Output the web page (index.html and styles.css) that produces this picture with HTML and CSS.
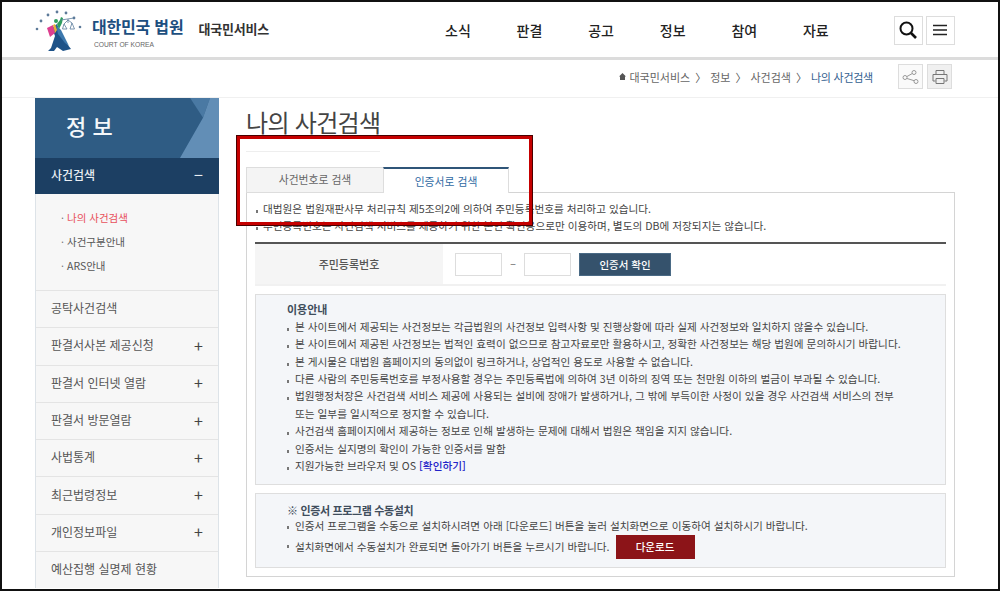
FILE: index.html
```html
<!DOCTYPE html>
<html lang="ko">
<head>
<meta charset="utf-8">
<title>나의 사건검색</title>
<link rel="stylesheet" href="styles.css">
</head>
<body>
<div class="frame">
  <header class="top">
    <div class="logo">
      <svg class="emblem" width="48" height="42" viewBox="0 0 48 42">
        <g fill="#5d7a99"><circle cx="2" cy="19" r="1.3"/><circle cx="6" cy="11" r="1.4"/><circle cx="13" cy="5" r="1.4"/><circle cx="22" cy="2" r="1.4"/><circle cx="31" cy="3" r="1.4"/><circle cx="39" cy="8" r="1.4"/><circle cx="45" cy="17" r="1.3"/></g>
        <path d="M13 41 L16 38 L20 26 L17 18 L22 14 L25 22 L29 30 L36 39 L28 41 L22 37 L19 41 Z" fill="#1d5288"/>
        <path d="M21 15 L26 20 L34 36 L30 33 L23 24 Z" fill="#3d78ad"/>
        <path d="M12 18 L18 15 L20 23 L15 27 Z" fill="#dd3f8f"/>
        <path d="M18 15 L20 23 L22 20 L20 14 Z" fill="#e9b23a"/>
        <path d="M22 14 L25 10 L26 7 L28 8 L27 13 L24 19 Z" fill="#2f9e5f"/>
        <circle cx="21" cy="11" r="2" fill="#2f9e5f"/>
        <path d="M26 10 L39 8 M33 9 V13 M29 14 L27.5 19 H32 Z M37 13 L35 19 H39.5 Z M33 10 L29 14 M33 10 L37 13" stroke="#5a7c9c" stroke-width=".8" fill="none"/>
      </svg>
      <div class="logo-text">
        <div class="logo-ko">대한민국 법원</div>
        <div class="logo-en">COURT OF KOREA</div>
      </div>
      <div class="logo-sub">대국민서비스</div>
    </div>
    <nav class="gnb">
      <span>소식</span><span>판결</span><span>공고</span><span>정보</span><span>참여</span><span>자료</span>
    </nav>
    <div class="top-btns">
      <button class="icon-btn" aria-label="검색">
        <svg width="20" height="20" viewBox="0 0 20 20"><circle cx="8.5" cy="8.5" r="6" fill="none" stroke="#111" stroke-width="2"/><path d="M13 13 L18 18" stroke="#111" stroke-width="2.6"/></svg>
      </button>
      <button class="icon-btn" aria-label="메뉴">
        <svg width="16" height="12" viewBox="0 0 16 12"><path d="M1 1.5H15M1 6H15M1 10.5H15" stroke="#222" stroke-width="1.7"/></svg>
      </button>
    </div>
  </header>
  <div class="crumbbar">
    <div class="crumbs">
      <svg class="home" width="7" height="7" viewBox="0 0 7 7"><path d="M3.5 0 L7 3.4H6V7H1V3.4H0Z" fill="#555"/></svg>
      <span>대국민서비스</span><i>〉</i><span>정보</span><i>〉</i><span>사건검색</span><i>〉</i><span class="cur">나의 사건검색</span>
    </div>
    <div class="tools">
      <button class="tool" aria-label="공유">
        <svg width="18" height="14" viewBox="0 0 18 14"><circle cx="3" cy="7.5" r="2" fill="none" stroke="#999"/><circle cx="12" cy="2.5" r="2" fill="none" stroke="#999"/><circle cx="14" cy="11.5" r="2" fill="none" stroke="#999"/><path d="M5 6.5 L10.3 3.5M5 8.5 L12.2 10.7" stroke="#999"/></svg>
      </button>
      <button class="tool tool-alt" aria-label="인쇄">
        <svg width="16" height="16" viewBox="0 0 16 16"><path d="M4 5V1.5H12V5M3.5 12H1V5.5H15V12H12.5M4 9.5H12V14.5H4Z" fill="none" stroke="#777"/></svg>
      </button>
    </div>
  </div>
  <div class="body">
    <aside class="side">
      <div class="side-title"><h2>정 보</h2><span class="facet facet-a"></span><span class="facet facet-b"></span></div>
      <div class="side-item active"><span>사건검색</span><b>−</b></div>
      <ul class="sub">
        <li class="on">나의 사건검색</li>
        <li>사건구분안내</li>
        <li>ARS안내</li>
      </ul>
      <div class="side-item"><span>공탁사건검색</span></div>
      <div class="side-item"><span>판결서사본 제공신청</span><b>+</b></div>
      <div class="side-item"><span>판결서 인터넷 열람</span><b>+</b></div>
      <div class="side-item"><span>판결서 방문열람</span><b>+</b></div>
      <div class="side-item"><span>사법통계</span><b>+</b></div>
      <div class="side-item"><span>최근법령정보</span><b>+</b></div>
      <div class="side-item"><span>개인정보파일</span><b>+</b></div>
      <div class="side-item"><span>예산집행 실명제 현황</span></div>
    </aside>
    <main class="main">
      <h1>나의 사건검색</h1>
      <div class="tabs">
        <div class="tab">사건번호로 검색</div>
        <div class="tab tab-on">인증서로 검색</div>
      </div>
      <section class="panel">
        <ul class="notes top-notes">
          <li>대법원은 법원재판사무 처리규칙 제5조의2에 의하여 주민등록번호를 처리하고 있습니다.</li>
          <li>주민등록번호는 사건검색 서비스를 제공하기 위한 본인 확인용으로만 이용하며, 별도의 DB에 저장되지는 않습니다.</li>
        </ul>
        <div class="idrow">
          <div class="idlabel">주민등록번호</div>
          <div class="idfields">
            <span class="inp"></span><span class="dash">−</span><span class="inp"></span>
            <button class="confirm">인증서 확인</button>
          </div>
        </div>
        <div class="box guide">
          <h3>이용안내</h3>
          <ul class="notes">
            <li>본 사이트에서 제공되는 사건정보는 각급법원의 사건정보 입력사항 및 진행상황에 따라 실제 사건정보와 일치하지 않을수 있습니다.</li>
            <li>본 사이트에서 제공된 사건정보는 법적인 효력이 없으므로 참고자료로만 활용하시고, 정확한 사건정보는 해당 법원에 문의하시기 바랍니다.</li>
            <li>본 게시물은 대법원 홈페이지의 동의없이 링크하거나, 상업적인 용도로 사용할 수 없습니다.</li>
            <li>다른 사람의 주민등록번호를 부정사용할 경우는 주민등록법에 의하여 3년 이하의 징역 또는 천만원 이하의 벌금이 부과될 수 있습니다.</li>
            <li>법원행정처장은 사건검색 서비스 제공에 사용되는 설비에 장애가 발생하거나, 그 밖에 부득이한 사정이 있을 경우 사건검색 서비스의 전부<br>또는 일부를 일시적으로 정지할 수 있습니다.</li>
            <li>사건검색 홈페이지에서 제공하는 정보로 인해 발생하는 문제에 대해서 법원은 책임을 지지 않습니다.</li>
            <li>인증서는 실지명의 확인이 가능한 인증서를 말함</li>
            <li>지원가능한 브라우저 및 OS <a class="link">[확인하기]</a></li>
          </ul>
        </div>
        <div class="box manual">
          <h3>※ 인증서 프로그램 수동설치</h3>
          <ul class="notes">
            <li>인증서 프로그램을 수동으로 설치하시려면 아래 [다운로드] 버튼을 눌러 설치화면으로 이동하여 설치하시기 바랍니다.</li>
            <li class="dl-line">설치화면에서 수동설치가 완료되면 돌아가기 버튼을 누르시기 바랍니다. <button class="download">다운로드</button></li>
          </ul>
        </div>
      </section>
    </main>
  </div>
  <div class="callout"></div>
</div>
</body>
</html>
```

FILE: styles.css
```css
* { box-sizing: border-box; }
html, body { margin: 0; height: 100%; overflow: hidden; }
body { background: #fff; font-family: "Noto Sans CJK KR", "Noto Sans", sans-serif; color: #444; }
ul { list-style: none; margin: 0; padding: 0; }
button { font-family: inherit; cursor: pointer; }

.frame { position: relative; width: 1000px; height: 591px; border: 2px solid #111; overflow: hidden; }

.top { display: flex; align-items: center; height: 58px; padding-left: 33px; border-bottom: 3px solid #dcdcdc; }
.logo { display: flex; align-items: center; width: 386px; }
.emblem { flex: none; margin-top: 2px; }
.logo-text { margin-left: 9px; }
.logo-ko { font-size: 16px; font-weight: 700; color: #1d4f80; line-height: 20px; letter-spacing: -.2px; margin-top: 5px; }
.logo-en { font-family: "Liberation Sans", sans-serif; font-size: 6.7px; color: #666; line-height: 9px; margin-top: 4px; margin-left: 2px; }
.logo-sub { font-size: 13px; font-weight: 700; color: #333; margin: -3px 0 0 15px; letter-spacing: -.2px; }
.gnb { display: flex; gap: 46px; margin-left: 24px; font-size: 14px; font-weight: 500; color: #222; }
.gnb span { width: 25.6px; white-space: nowrap; }
.top-btns { display: flex; gap: 3px; margin-left: 65px; margin-top: 1px; }
.icon-btn { width: 29px; height: 29px; padding: 0; border: 1px solid #ddd; background: #fff; display: flex; align-items: center; justify-content: center; }

.crumbbar { display: flex; align-items: center; justify-content: flex-end; height: 38px; padding: 0 46px 4px 0; border-bottom: 1px solid #f0f0f0; }
.crumbs { display: flex; align-items: center; font-size: 11px; color: #666; margin-right: 1px; }
.crumbs i { font-style: normal; margin: 0 4px 0 5px; color: #555; }
.crumbs .cur { color: #33608f; letter-spacing: -.25px; }
.home { margin-right: 3px; }
.tools { display: flex; gap: 4px; margin-left: 24px; }
.tool { width: 25px; height: 25px; padding: 0; border: 1px solid #ddd; background: #fafafa; display: flex; align-items: center; justify-content: center; }
.tool-alt { background: #f0f0f0; }

.body { display: flex; align-items: flex-start; padding-left: 33px; }
.side { width: 184px; flex: none; border: solid #dde3e8; border-width: 0 1px; background: #f7f7f7; }
.side-title { position: relative; height: 60px; margin: 0 -1px; background: #2f5c84; overflow: hidden; }
.side-title h2 { margin: 0; padding-left: 31px; font-size: 22px; line-height: 54px; font-weight: 500; color: #f4f7fa; }
.facet { position: absolute; top: 0; right: 0; width: 39px; height: 60px; }
.facet-a { background: #4a79a3; clip-path: polygon(26% 0, 77% 0, 59% 33%); }
.facet-b { background: #628eb6; clip-path: polygon(77% 0, 100% 0, 100% 100%, 0 100%, 59% 33%); }
.side-item { display: flex; align-items: center; justify-content: space-between; height: 37.3px; padding: 0 15px 3px; font-size: 12px; color: #555; border-top: 1px solid #e4e4e4; }
.side-item b { font-weight: 400; font-size: 16px; color: #444; line-height: 1; }
.side-item.active { height: 36px; margin: 0 -1px; padding: 0 16px 4px; background: #1c3f63; color: #e9eef3; font-weight: 500; border-top: 0; }
.side-item.active b { color: #e9eef3; }
.sub { padding: 12px 0 12px 25px; font-size: 10.5px; color: #555; }
.sub li { height: 24px; line-height: 23px; position: relative; padding-left: 6px; }
.sub li::before { content: "·"; position: absolute; left: 0; color: #777; }
.sub .on { color: #e8505b; }

.main { width: 709px; margin-left: 27px; }
.main h1 { margin: 0; height: 54px; width: 134px; font-size: 24px; font-weight: 400; line-height: 47px; letter-spacing: -.7px; color: #444; white-space: nowrap; border-bottom: 1px solid #eee; }
.tabs { display: flex; height: 26px; margin-top: 15px; }
.tab { width: 137px; height: 26px; border: 1px solid #ddd; border-right: 0; background: #f4f4f4; font-size: 10.8px; line-height: 23px; text-align: center; color: #666; }
.tab-on { width: 126px; background: #fff; border: 1px solid #ddd; border-top: 2px solid #2f5578; border-bottom: 0; color: #2f6aa3; line-height: 24px; position: relative; z-index: 1; }
.panel { height: 385px; margin-top: -1px; padding: 7px 8px 0; border: 1px solid #d4d4d4; }
.notes { font-size: 10.65px; line-height: 17.4px; color: #444; }
.notes li { position: relative; padding-left: 8px; white-space: nowrap; }
.notes li::before { content: ""; position: absolute; left: 1px; top: 10px; width: 2px; height: 3px; background: #777; }
.idrow { display: flex; height: 44px; margin-top: 7px; border-top: 2px solid #555; border-bottom: 2px solid #f1f1f1; }
.idlabel { width: 188px; background: #f5f5f5; font-size: 11px; font-weight: 500; line-height: 40px; text-align: center; color: #555; }
.idfields { display: flex; align-items: flex-start; padding: 9px 0 0 12px; }
.inp { width: 47px; height: 23px; border: 1px solid #ddd; background: #fff; }
.dash { width: 22px; text-align: center; font-size: 10px; line-height: 22px; color: #666; }
.confirm { width: 92px; height: 23px; margin-left: 8px; padding: 0; border: 1px solid #4a6a85; background: #35526c; color: #fff; font-size: 10.5px; font-weight: 500; }
.box { border: 1px solid #dedede; background: #f4f6f9; padding: 0 0 0 31px; }
.box h3 { margin: 0; font-size: 11px; font-weight: 700; color: #3f4d5c; line-height: 17px; }
.box .notes li::before { left: 0; }
.guide { height: 191px; margin-top: 8px; padding-top: 6px; }
.manual { height: 75px; margin-top: 8px; padding-top: 8px; }
.manual h3 { letter-spacing: -.35px; }
.link { color: #2323c8; font-weight: 500; }
.manual .notes { line-height: 19px; margin-top: -3px; }
.dl-line { display: flex; align-items: center; gap: 6px; height: 24px; }
.download { width: 79px; height: 24px; padding: 0; border: 0; background: #8c1418; color: #fff; font-size: 10.5px; font-weight: 500; }

.callout { position: absolute; left: 234px; top: 133px; width: 297px; height: 91px; border: 4px solid #c50000; outline: 1px solid #4a0000; outline-offset: -1px; }
```
